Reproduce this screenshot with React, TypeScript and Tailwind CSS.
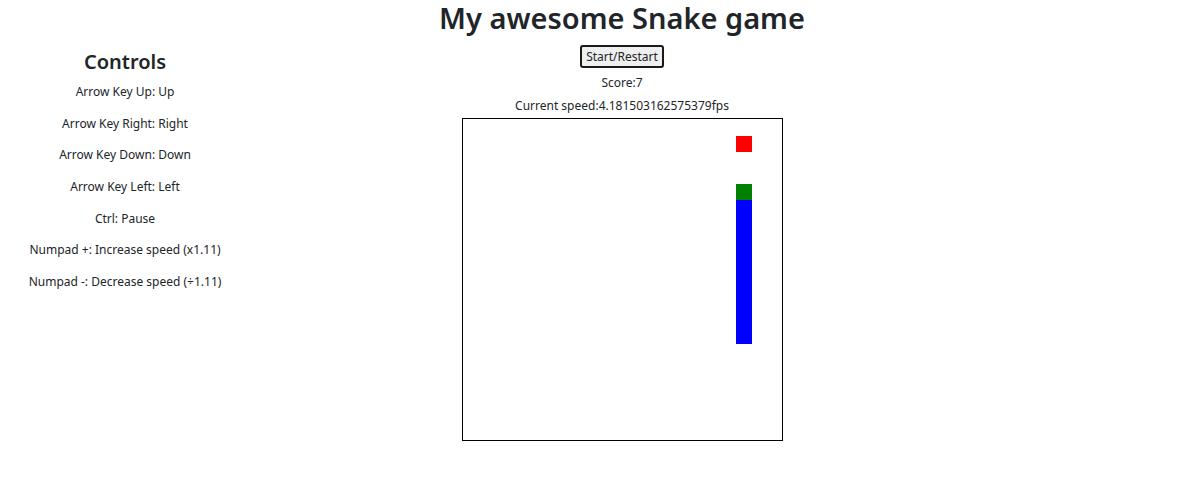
const controls = [
  "Arrow Key Up: Up",
  "Arrow Key Right: Right",
  "Arrow Key Down: Down",
  "Arrow Key Left: Left",
  "Ctrl: Pause",
  "Numpad +: Increase speed (x1.11)",
  "Numpad -: Decrease speed (÷1.11)",
];

export default function App() {
  return (
    <div
      className="flex w-[1202px] h-[484px] bg-white text-[#212529]"
      style={{ fontFamily: '"Noto Sans", "Open Sans", sans-serif' }}
    >
      {/* Controls column */}
      <div className="w-[250px] pt-[49px] flex flex-col items-center text-center">
        <h3 className="text-[20px] leading-[26px] font-semibold mb-[8px]">Controls</h3>
        {controls.map((c) => (
          <p key={c} className="text-[12px] leading-[18px] mb-[13.67px]">
            {c}
          </p>
        ))}
      </div>

      {/* Game column */}
      <div className="w-[744px] flex flex-col items-center text-center">
        <h1 className="text-[29px] leading-[36px] font-semibold">My awesome Snake game</h1>
        <button className="mt-[9px] px-[4px] h-[23px] text-[12px] leading-[17px] bg-[#efefef] border-2 border-[#1a1a1a] rounded-[3px]">
          Start/Restart
        </button>
        <p className="text-[12px] leading-[18px] mt-[6px]">Score:7</p>
        <p className="text-[12px] leading-[18px] mt-[5px]">Current speed:4.181503162575379fps</p>
        <div className="relative mt-[3px] w-[321px] h-[323px] border border-black">
          <div className="absolute left-[273px] top-[17px] w-4 h-4 bg-[#ff0000]" />
          <div className="absolute left-[273px] top-[65px] w-4 h-4 bg-[#008000]" />
          <div className="absolute left-[273px] top-[81px] w-4 h-[144px] bg-[#0000ff]" />
        </div>
      </div>
    </div>
  );
}
